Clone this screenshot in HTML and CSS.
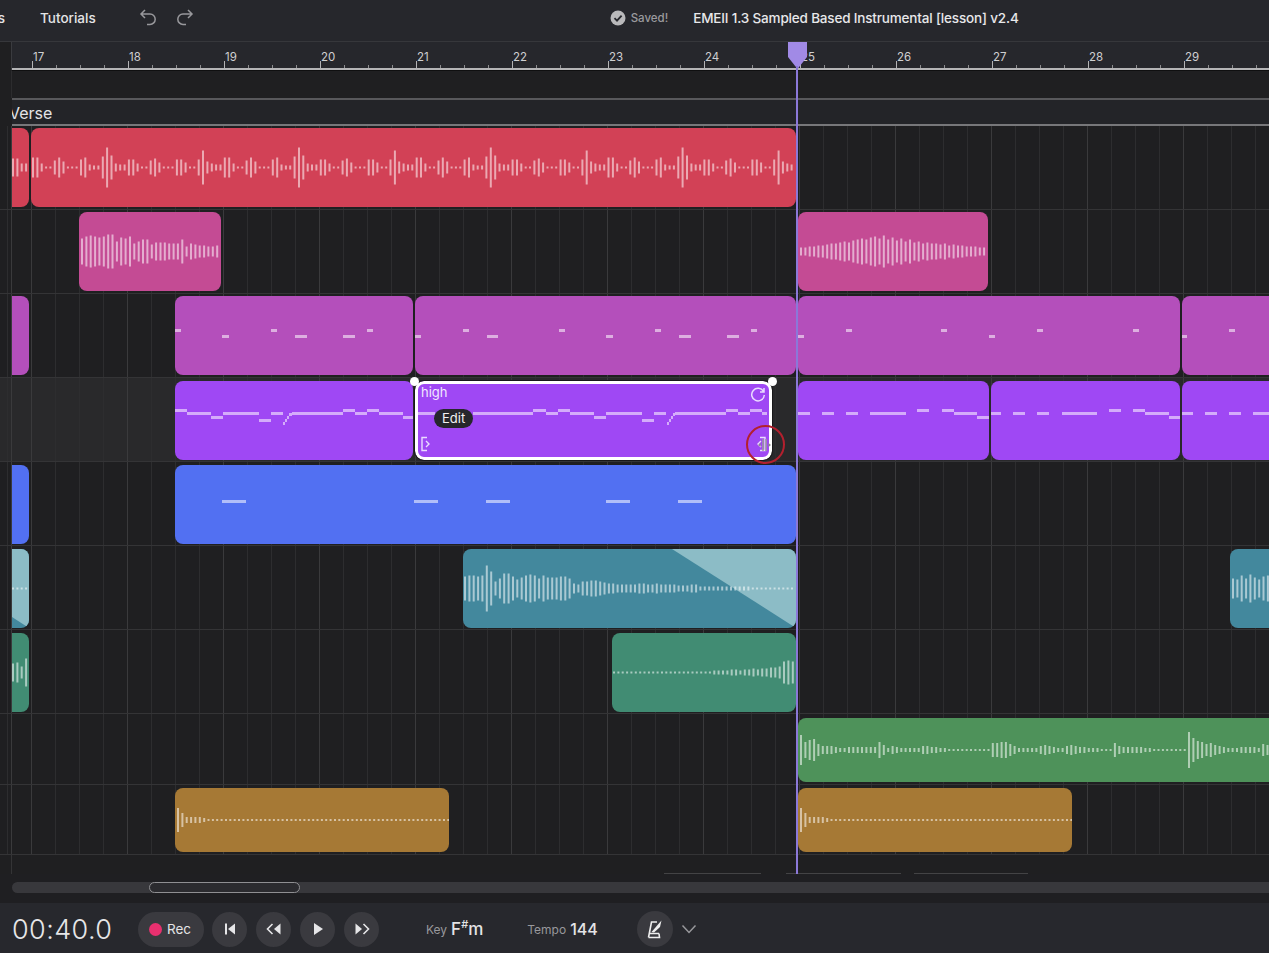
FILE: index.html
```html
<!DOCTYPE html>
<html lang="en">

<head>
    <meta charset="UTF-8">
    <title>EMEII 1.3 Sampled Based Instrumental [lesson] v2.4</title>
    <link rel="stylesheet" href="styles.css">
</head>

<body>

    <header class="topbar">
        <a class="menu-cut">s</a>
        <a class="menu-item">Tutorials</a>
        <button class="history-btn" aria-label="Undo">
            <svg width="22" height="22" viewBox="0 0 22 22"><path d="M8 3 4 7l4 4M4 7h9a5.2 5.2 0 0 1 0 10.400H10"/></svg>
        </button>
        <button class="history-btn" aria-label="Redo">
            <svg width="22" height="22" viewBox="0 0 22 22"><path d="M14 3l4 4-4 4M18 7H9a5.200 5.200 0 0 0 0 10.400h3"/></svg>
        </button>
        <svg class="saved-icon" width="16" height="16" viewBox="0 0 16 16"><circle cx="8" cy="8" r="7.500" fill="#b9b9bb"/><path d="M4.500 8.200 7 10.600l4.600-5" fill="none" stroke="#26272c" stroke-width="1.800"/></svg>
        <span class="saved-text">Saved!</span>
        <span class="project-title">EMEII 1.3 Sampled Based Instrumental [lesson] v2.4</span>
    </header>

    <main class="arranger">
        <div class="ruler">
            <span>17</span><span>18</span><span>19</span><span>20</span><span>21</span><span>22</span><span>23</span>
            <span>24</span><span>25</span><span>26</span><span>27</span><span>28</span><span>29</span>
        </div>
        <div class="spacer-row"></div>
        <div class="section-row"><span>Verse</span></div>

        <div class="track t1" data-track="1"></div>
        <div class="track t2" data-track="2"></div>
        <div class="track t3" data-track="3"></div>
        <div class="track t4 track-active" data-track="4">
            <div class="selected-clip">
                <i class="handle handle-l"></i>
                <i class="handle handle-r"></i>
                <span class="clip-name">high</span>
                <svg class="loop-icon" width="18" height="18" viewBox="0 0 18 18"><path d="M14.500 5.500A6.300 6.300 0 1 0 15.300 9M15 2v4h-4"/></svg>
                <span class="edit-pill">Edit</span>
                <svg class="trim-icon trim-l" width="12" height="16" viewBox="0 0 12 16"><path d="M7 1.500H2v13h5M6 5l3 3-3 3"/></svg>
                <svg class="trim-icon trim-r" width="12" height="16" viewBox="0 0 12 16"><path d="M5 1.500h5v13H5M6 5 3 8l3 3"/></svg>
            </div>
            <div class="click-ring"></div>
            <svg class="resize-cursor" width="16" height="14" viewBox="0 0 16 14"><path d="M6 1v12M9 1v12" stroke="#9a9a9e" stroke-width="1.500"/><path d="M3.500 5 1 7l2.500 2zM11.500 5 14 7l-2.500 2z" fill="#8c8c90"/></svg>
        </div>
        <div class="track t5" data-track="5"></div>
        <div class="track t6" data-track="6"></div>
        <div class="track t7" data-track="7"></div>
        <div class="track t8" data-track="8"></div>
        <div class="track t9" data-track="9"></div>
        <div class="track-tail">
            <i class="ghost g1"></i>
            <i class="ghost g2"></i>
            <i class="ghost g3"></i>
        </div>

        <div class="playhead">
            <svg width="20" height="27" viewBox="0 0 20 27"><path d="M0 0H19V15L9.500 27 0 15Z" fill="#a18ae6"/></svg>
        </div>
    </main>

    <div class="scroll-area">
        <div class="scroll-track">
            <div class="scroll-thumb"></div>
        </div>
    </div>

    <footer class="transport">
        <span class="timer">00:40.0</span>
        <button class="rec-btn"><i class="rec-dot"></i>Rec</button>
        <button class="round-btn first" aria-label="Back to start">
            <svg width="14" height="14" viewBox="0 0 14 14"><path d="M2 1.500h2v11H2zM12 1.500v11L5 7z"/></svg>
        </button>
        <button class="round-btn" aria-label="Rewind">
            <svg width="18" height="14" viewBox="0 0 18 14"><path d="M15.500 1.500v11L9 7z"/><path d="M7.500 2 2.500 7l5 5" fill="none" stroke="#e6e6e8" stroke-width="1.600"/></svg>
        </button>
        <button class="round-btn" aria-label="Play">
            <svg width="14" height="14" viewBox="0 0 14 14"><path d="M3 1v12l9-6z"/></svg>
        </button>
        <button class="round-btn" aria-label="Forward">
            <svg width="18" height="14" viewBox="0 0 18 14"><path d="M2.500 1.500v11L9 7z"/><path d="M10.500 2l5 5-5 5" fill="none" stroke="#e6e6e8" stroke-width="1.600"/></svg>
        </button>
        <span class="small-label key-label">Key</span>
        <span class="key-value">F<sup>#</sup>m</span>
        <span class="small-label tempo-label">Tempo</span>
        <span class="tempo-value">144</span>
        <button class="round-btn metronome" aria-label="Metronome">
            <svg width="18" height="20" viewBox="0 0 18 20"><path d="M2.500 18.500 5.500 3H11M2.500 18.500H13.500L13 14.500M3.500 14.500H13" fill="none" stroke="#eee" stroke-width="1.600"/><path d="M5.500 13 15.500 1.500 14 8 8 13.500z" fill="#eee"/></svg>
        </button>
        <svg class="chevron" width="16" height="10" viewBox="0 0 16 10"><path d="M1.500 1.500 8 8.500l6.500-7"/></svg>
    </footer>

    <script src="script.js"></script>

</body>

</html>
```

FILE: styles.css
```css
* {
    box-sizing: border-box;
}

body {
    margin: 0;
    height: 953px;
    overflow: hidden;
    background-color: #1f1f21;
    color: #e4e4e6;
    font-family: Inter, "Liberation Sans", sans-serif;
}

button {
    border: 0;
    padding: 0;
    color: inherit;
    font: inherit;
    background: none;
}

/* top bar */
.topbar {
    display: flex;
    align-items: center;
    height: 42px;
    padding-bottom: 6px;
    background-color: #26272c;
    border-bottom: 1px solid #36373b;
    font-size: 13.500px;
    font-weight: 500;
}

.menu-cut {
    width: 5px;
    overflow: hidden;
    direction: rtl;
}

.menu-item {
    margin-left: 35px;
    margin-right: 41px;
}

.history-btn {
    display: flex;
    width: 22px;
    height: 22px;
    margin-right: 15px;
}

.history-btn svg {
    fill: none;
    stroke: #98989c;
    stroke-width: 1.500;
}

.saved-icon {
    margin-left: 399px;
}

.saved-text {
    margin-left: 5px;
    color: #9a9a9e;
    font-size: 11.500px;
}

.project-title {
    margin-left: 25px;
    color: #e8e8ea;
    letter-spacing: -0.170px;
}

/* arranger */
.arranger {
    position: relative;
    height: 832px;
    overflow: hidden;
}

.ruler {
    display: flex;
    height: 29px;
    margin-left: 11px;
    padding-left: 20px;
    background-color: #26272c;
    background-image:
        linear-gradient(#b4b4b6, #b4b4b6),
        linear-gradient(90deg, #b4b4b6 1px, transparent 1px),
        linear-gradient(90deg, #8e8e90 1px, transparent 1px);
    background-repeat: repeat-x;
    background-size: 100% 2px, 96px 8px, 24px 4px;
    background-position: 0 26px, 20px 19px, 20px 23px;
    border-left: 1px solid #3a3b3f;
    border-bottom: 1px solid #0f0f10;
}

.ruler span {
    flex: 0 0 96px;
    padding: 8px 0 0 1px;
    color: #d0d0d2;
    font-size: 11.500px;
}

.spacer-row {
    height: 27px;
    margin-left: 11px;
    border-left: 1px solid #2c2c2e;
}

.section-row {
    height: 28px;
    margin-left: 12px;
    overflow: hidden;
    background-color: #232428;
    border-top: 2px solid #58585b;
    border-bottom: 2px solid #77777a;
    font-size: 16px;
    line-height: 27px;
}

.section-row span {
    display: block;
    margin-left: -3px;
}

.track {
    position: relative;
    height: 84px;
    border-bottom: 1px solid #343436;
    background-image:
        linear-gradient(90deg, #3a3a3c 1px, transparent 1px),
        linear-gradient(90deg, #2d2d2f 1px, transparent 1px),
        linear-gradient(90deg, #3a3a3c 1px, transparent 1px);
    background-repeat: repeat, repeat, no-repeat;
    background-size: 96px 100%, 24px 100%, 12px 100%;
    background-position: 31px 0, 7px 0, 11px 0;
}

.track-active {
    background-color: #29292b;
}

.t8 {
    height: 71px;
}

.t9 {
    height: 70px;
}

.track-tail {
    position: relative;
    height: 19px;
    border-left: 1px solid #343436;
    margin-left: 11px;
}

.ghost {
    position: absolute;
    top: 18px;
    height: 1px;
    background-color: #434345;
}

.g1 { left: 652px; width: 97px; }
.g2 { left: 774px; width: 115px; }
.g3 { left: 902px; width: 114px; }

/* clips */
.clip {
    position: absolute;
    top: 3px;
    height: 79px;
    overflow: hidden;
    border-radius: 8px;
}

.t1 .clip,
.t2 .clip,
.t3 .clip {
    top: 2px;
}

.t8 .clip {
    top: 4px;
    height: 64px;
}

.t9 .clip {
    height: 64px;
}

.clip.cut {
    border-radius: 0 8px 8px 0;
}

.red { background-color: #d24156; }
.pink { background-color: #c44b94; }
.magenta { background-color: #b44fbb; }
.purple { background-color: #9f48f4; }
.blue { background-color: #5270f2; }
.teal { background-color: #43889d; }
.sea { background-color: #418c73; }
.green { background-color: #4e925a; }
.amber { background-color: #a67935; }

.clip svg {
    position: absolute;
    top: 0;
    left: 0;
}

.clip svg path {
    fill: none;
    stroke: rgba(255, 255, 255, .55);
    stroke-width: 2;
}

.fade {
    position: absolute;
    top: 0;
    right: 0;
    height: 100%;
    background-color: #8cbcc6;
}

.fade-end {
    width: 124px;
    clip-path: polygon(0 0, 100% 0, 100% 100%);
}

.fade-stub {
    width: 100%;
    clip-path: polygon(0 0, 100% 0, 100% 100%, 0 86%);
}

.note {
    position: absolute;
    height: 3px;
    background-color: rgba(255, 255, 255, .55);
}

/* selected clip */
.selected-clip {
    position: absolute;
    left: 415px;
    top: 3px;
    z-index: 2;
    width: 357px;
    height: 79px;
    border: 3px solid #fff;
    border-radius: 9px;
    outline: 1px solid #18181a;
}

.handle {
    position: absolute;
    top: -7px;
    width: 9px;
    height: 9px;
    border-radius: 50%;
    background-color: #fff;
}

.handle-l { left: -8px; }
.handle-r { right: -8px; }

.clip-name {
    position: absolute;
    left: 3px;
    top: 0;
    color: #f1e6ff;
    font-size: 13px;
}

.loop-icon {
    position: absolute;
    right: 2px;
    top: 2px;
    fill: none;
    stroke: #eadcff;
    stroke-width: 1.500;
}

.edit-pill {
    position: absolute;
    left: 16px;
    top: 25px;
    padding: 0 8px;
    height: 19px;
    border-radius: 10px;
    background-color: #26272c;
    color: #f2f2f2;
    font-size: 13px;
    line-height: 19px;
}

.trim-icon {
    position: absolute;
    bottom: 5px;
    fill: none;
    stroke: #eadcff;
    stroke-width: 1.400;
}

.trim-l { left: 2px; }
.trim-r { right: 2px; }

.click-ring {
    position: absolute;
    left: 746px;
    top: 47px;
    z-index: 3;
    width: 39px;
    height: 39px;
    border: 2px solid #b3202e;
    border-radius: 50%;
}

.resize-cursor {
    position: absolute;
    left: 757px;
    top: 60px;
    z-index: 3;
}

.playhead {
    position: absolute;
    left: 788px;
    top: 0;
    z-index: 4;
    width: 19px;
    height: 100%;
}

.playhead::after {
    content: "";
    position: absolute;
    left: 8px;
    top: 24px;
    bottom: 0;
    width: 2px;
    background-color: #8b78d8;
}

/* scrollbar */
.scroll-area {
    height: 29px;
    padding: 8px 0 0 12px;
    background-color: #1f1f22;
}

.scroll-track {
    height: 11px;
    padding-left: 137px;
    border-radius: 6px 0 0 6px;
    background-color: #38383c;
}

.scroll-thumb {
    width: 151px;
    height: 11px;
    border: 1px solid #8f8f92;
    border-radius: 6px;
    background-color: #2b2b2f;
}

/* transport */
.transport {
    display: flex;
    align-items: center;
    height: 50px;
    padding: 2px 0 0 12px;
    background-color: #27282d;
}

.timer {
    width: 126px;
    color: #e6e6e8;
    font-size: 27px;
    font-weight: 300;
    letter-spacing: .4px;
}

.rec-btn {
    display: flex;
    align-items: center;
    width: 66px;
    height: 35px;
    padding-left: 11px;
    border-radius: 18px;
    background-color: #3a3a3f;
    font-size: 13.500px;
}

.rec-dot {
    width: 13px;
    height: 13px;
    margin-right: 5px;
    border-radius: 50%;
    background-color: #e8306f;
}

.round-btn {
    display: flex;
    align-items: center;
    justify-content: center;
    width: 35px;
    height: 35px;
    margin-left: 9px;
    border-radius: 50%;
    background-color: #3a3a3f;
}

.round-btn.first {
    margin-left: 8px;
}

.round-btn svg {
    fill: #e6e6e8;
}

.small-label {
    color: #98989c;
    font-size: 12px;
}

.key-label {
    margin-left: 47px;
}

.key-value {
    margin-left: 4px;
    font-size: 17px;
    font-weight: 500;
}

.key-value sup {
    font-size: 11px;
    line-height: 0;
}

.tempo-label {
    margin-left: 44px;
}

.tempo-value {
    margin-left: 4px;
    font-size: 16px;
    font-weight: 500;
}

.round-btn.metronome {
    width: 36px;
    height: 36px;
    margin-left: 39px;
}

.chevron {
    margin-left: 8px;
    fill: none;
    stroke: #98989c;
    stroke-width: 1.500;
}
```

FILE: script.js
```js
// bølgeformer og noder for klippene
const RED = [10, 10, 4, 1, 1, 7, 10, 6, 1, 1, 1, 8, 10, 3, 2, 2, 11, 20, 12, 4, 3, 3, 8, 8, 4, 1, 1, 7, 9, 5, 1, 1, 1, 8, 8, 5, 1, 1, 8, 17, 6, 4, 3, 3];
const PINK1 = [13, 15, 16, 15, 14, 15, 17, 17, 10, 14, 13, 15, 8, 10, 12, 12, 7, 9, 9, 9, 8, 8, 8, 12, 5, 8, 7, 6, 6, 5, 5, 6, 3, 2];
const PINK2 = [4, 4, 5, 5, 6, 6, 7, 8, 8, 9, 10, 9, 11, 12, 13, 12, 14, 15, 13, 16, 12, 14, 11, 13, 10, 12, 9, 10, 8, 9, 8, 8, 7, 8, 6, 7, 6, 6, 5, 5, 5, 4, 4, 3];
const TEAL = [12, 13, 13, 12, 13, 23, 17, 7, 10, 15, 15, 12, 9, 11, 13, 14, 13, 10, 13, 11, 11, 11, 12, 12, 10, 5, 4, 7, 7, 8, 8, 7, 6, 5, 5, 4, 4, 4, 4, 4, 5, 5, 4, 4, 5, 4, 4, 4, 4, 3, 3, 3, 4, 4, 2, 2, 2, 2, 2, 2, 2, 2, 2, 2, 2, 2, 1];
const SEA = [1, 1, 1, 1, 1, 1, 1, 1, 1, 1, 1, 1, 1, 1, 1, 1, 1, 1, 1, 1, 1, 1, 1, 2, 2, 2, 2, 3, 3, 2, 3, 3, 4, 3, 4, 4, 5, 5, 6, 11, 12, 11, 11, 12];
const GREEN = [15, 8, 10, 11, 6, 4, 4, 4, 3, 2, 2, 3, 3, 3, 3, 3, 3, 3, 8, 5, 2, 4, 3, 2, 2, 2, 2, 2, 4, 4, 3, 3, 2, 2, 1, 1, 1, 1, 1, 1, 1, 1, 1, 1, 7, 7, 8, 8, 6, 4, 2, 2, 2, 2, 2, 4, 5, 4, 3, 2, 2, 4, 5, 4, 3, 3, 2, 2, 2, 1, 1, 1, 7, 4, 3, 3, 3, 3, 3, 2, 2, 1, 1, 1, 1, 1, 1, 1, 1, 18, 12, 9, 8, 6, 7, 5, 4, 3, 2, 2, 2, 3, 3, 3, 3, 2, 6, 5, 4, 3];
const AMBER = [12, 7, 3, 3, 3, 3, 2];

const PURPLE_A = [[175, 187, 410], [187, 211, 413.5], [211, 223, 417], [223, 259, 413.5], [259, 271, 420], [271, 283, 413.5], [283, 285, 423], [285, 287, 420], [287, 289, 417], [289, 292, 414], [292, 343, 413.5], [343, 355, 410], [355, 367, 413.5], [367, 379, 410], [379, 403, 413.5], [403, 413, 417]];
const PURPLE_B = [[417, 435, 413.5], [473, 533, 413.5], [533, 546, 410], [546, 558, 413.5], [558, 570, 410], [570, 594, 413.5], [594, 606, 417], [606, 642, 413.5], [642, 654, 420], [654, 666, 413.5], [667, 669, 423], [669, 671, 420], [671, 673, 417], [673, 675, 414], [675, 726, 413.5], [726, 738, 410], [738, 750, 413.5], [750, 762, 410], [762, 767, 413.5]];
const PURPLE_C = [[798, 810, 413.5], [822, 834, 413.5], [846, 858, 413.5], [870, 906, 413.5], [917, 929, 410], [942, 954, 410], [954, 977, 413.5], [977, 989, 417]];
const PURPLE_D = [[991, 1001, 413.5], [1013, 1025, 413.5], [1037, 1049, 413.5], [1062, 1097, 413.5], [1109, 1121, 410], [1133, 1145, 410], [1145, 1169, 413.5], [1169, 1180, 417]];
const PURPLE_E = [[1182, 1193, 413.5], [1205, 1217, 413.5], [1229, 1241, 413.5], [1253, 1269, 413.5]];

const MAG_A = [[175, 181, 330], [222, 229, 336], [271, 277, 330], [295, 307, 336], [343, 355, 336], [367, 373, 330]];
const MAG_B = [[415, 421, 336], [463, 469, 330], [487, 498, 336], [559, 565, 330], [606, 613, 336], [655, 661, 330], [679, 691, 336], [727, 739, 336], [751, 757, 330]];
const MAG_C = [[798, 804, 336], [846, 852, 330], [941, 947, 330], [989, 995, 336], [1037, 1043, 330], [1133, 1139, 330]];
const MAG_D = [[1182, 1187, 336], [1229, 1235, 330]];

const BLUE_N = [[222, 246, 501], [414, 438, 501], [486, 510, 501], [606, 630, 501], [678, 702, 501]];

const clips = [
    { track: 1, color: "red", x: 12, end: 29, cut: true, wave: [9, 9, 4, 4], pad: 1 },
    { track: 1, color: "red", x: 31, end: 796, wave: RED, loop: true, pad: 2 },
    { track: 2, color: "pink", x: 79, end: 221, wave: PINK1, pad: 3 },
    { track: 2, color: "pink", x: 798, end: 988, wave: PINK2, pad: 3 },
    { track: 3, color: "magenta", x: 12, end: 29, cut: true },
    { track: 3, color: "magenta", x: 175, end: 413, notes: MAG_A },
    { track: 3, color: "magenta", x: 415, end: 796, notes: MAG_B },
    { track: 3, color: "magenta", x: 798, end: 1180, notes: MAG_C },
    { track: 3, color: "magenta", x: 1182, end: 1290, notes: MAG_D },
    { track: 4, color: "purple", x: 175, end: 413, notes: PURPLE_A },
    { track: 4, color: "purple", x: 417, end: 770, notes: PURPLE_B },
    { track: 4, color: "purple", x: 798, end: 989, notes: PURPLE_C },
    { track: 4, color: "purple", x: 991, end: 1180, notes: PURPLE_D },
    { track: 4, color: "purple", x: 1182, end: 1290, notes: PURPLE_E },
    { track: 5, color: "blue", x: 12, end: 29, cut: true },
    { track: 5, color: "blue", x: 175, end: 796, notes: BLUE_N },
    { track: 6, color: "teal", x: 12, end: 29, cut: true, fade: "fade-stub", wave: [1, 1, 1, 1], pad: 1 },
    { track: 6, color: "teal", x: 463, end: 796, fade: "fade-end", wave: TEAL, pad: 2 },
    { track: 6, color: "teal", x: 1230, end: 1290, wave: [10, 9, 13, 10, 14, 11, 9, 12, 13], pad: 3 },
    { track: 7, color: "sea", x: 12, end: 29, cut: true, wave: [9, 10, 6, 14], pad: 1 },
    { track: 7, color: "sea", x: 612, end: 796, wave: SEA, pad: 2 },
    { track: 8, color: "green", x: 798, end: 1290, wave: GREEN, pad: 3 },
    { track: 9, color: "amber", x: 175, end: 449, wave: AMBER, pad: 3 },
    { track: 9, color: "amber", x: 798, end: 1072, wave: AMBER, pad: 3 }
];

function lavBoelge(klip, bredde, hoejde) {
    const ns = "http://www.w3.org/2000/svg";
    const svg = document.createElementNS(ns, "svg");
    svg.setAttribute("width", bredde);
    svg.setAttribute("height", hoejde);
    const midte = hoejde / 2;
    let d = "";
    const skridt = 4.36;
    for (let i = 0; klip.pad + i * skridt < bredde; i++) {
        const h = klip.loop ? klip.wave[i % klip.wave.length] : (klip.wave[i] || 1);
        const x = (klip.pad + i * skridt).toFixed(1);
        d += "M" + x + " " + (midte - h) + "V" + (midte + h);
    }
    const path = document.createElementNS(ns, "path");
    path.setAttribute("d", d);
    svg.appendChild(path);
    return svg;
}

clips.forEach(klip => {
    const spor = document.querySelector('[data-track="' + klip.track + '"]');
    const el = document.createElement("div");
    el.className = "clip " + klip.color + (klip.cut ? " cut" : "");
    el.style.left = klip.x + "px";
    el.style.width = (klip.end - klip.x) + "px";
    spor.appendChild(el);
    const boks = el.getBoundingClientRect();

    if (klip.fade) {
        const fade = document.createElement("div");
        fade.className = "fade " + klip.fade;
        el.appendChild(fade);
    }
    if (klip.wave) {
        el.appendChild(lavBoelge(klip, boks.width, boks.height));
    }
    if (klip.notes) {
        klip.notes.forEach(n => {
            const node = document.createElement("i");
            node.className = "note";
            node.style.left = (n[0] - klip.x) + "px";
            node.style.width = (n[1] - n[0]) + "px";
            node.style.top = (n[2] - boks.top - 1.5) + "px";
            el.appendChild(node);
        });
    }
});
```
